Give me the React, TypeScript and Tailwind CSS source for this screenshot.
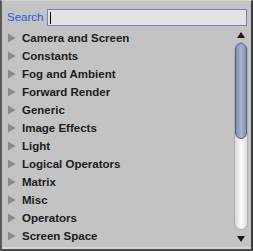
import React from "react"

const items = [
  "Camera and Screen",
  "Constants",
  "Fog and Ambient",
  "Forward Render",
  "Generic",
  "Image Effects",
  "Light",
  "Logical Operators",
  "Matrix",
  "Misc",
  "Operators",
  "Screen Space",
]

export default function App() {
  return (
    <div className="w-[253px] h-[251px] bg-[#c3c3c3] border-l-2 border-r-2 border-b-2 border-l-[#5a5a5a] border-r-[#3a3a3a] border-b-[#4a4a4a] border-t border-t-[#d4d4d4] flex flex-col overflow-hidden font-['Liberation_Sans',sans-serif]">
      <div className="flex items-end h-[27px] pl-[5px] pr-[4px] pb-[2px]">
        <span className="text-[11.5px] leading-[17px] text-[#2f55d4] mr-[4px]">Search</span>
        <div className="flex-1 h-[17px] border border-[#6d80d8] bg-[#e2e2e2] flex items-center pl-[2px]">
          <div className="w-px h-[12px] bg-black" />
        </div>
      </div>
      <div className="flex flex-1">
        <div className="flex-1 flex flex-col pt-[1px]">
          {items.map(name => (
            <div key={name} className="h-[18px] flex items-center pl-[5px]">
              <svg width="9" height="10" viewBox="0 0 9 10" className="mr-[6px]">
                <polygon points="1,0.5 8.5,5 1,9.5" fill="#8a8a8a" />
              </svg>
              <span className="text-[11.5px] leading-[18px] font-bold text-[#1c1c1c]">{name}</span>
            </div>
          ))}
        </div>
        <div className="w-[16px] mr-[2px] flex flex-col items-center">
          <div className="h-[10px] flex items-end justify-center">
            <svg width="8" height="6" viewBox="0 0 8 6">
              <polygon points="4,0 8,6 0,6" fill="#1a1a1a" />
            </svg>
          </div>
          <div className="mt-[4px] w-[14px] h-[188px] rounded-full bg-gradient-to-r from-[#d8d8d8] via-[#fbfbfb] to-[#e0e0e0] border border-[#b0b0b0] flex flex-col">
            <div className="h-[96px] w-full rounded-full border border-[#56627e] bg-gradient-to-r from-[#7f8db0] via-[#a8b4cd] to-[#8592b2]" />
          </div>
          <div className="mt-[6px] h-[8px] flex items-start justify-center">
            <svg width="8" height="6" viewBox="0 0 8 6">
              <polygon points="0,0 8,0 4,6" fill="#1a1a1a" />
            </svg>
          </div>
        </div>
      </div>
      <div className="h-[2px] bg-[#d6d6d6]" />
    </div>
  )
}
